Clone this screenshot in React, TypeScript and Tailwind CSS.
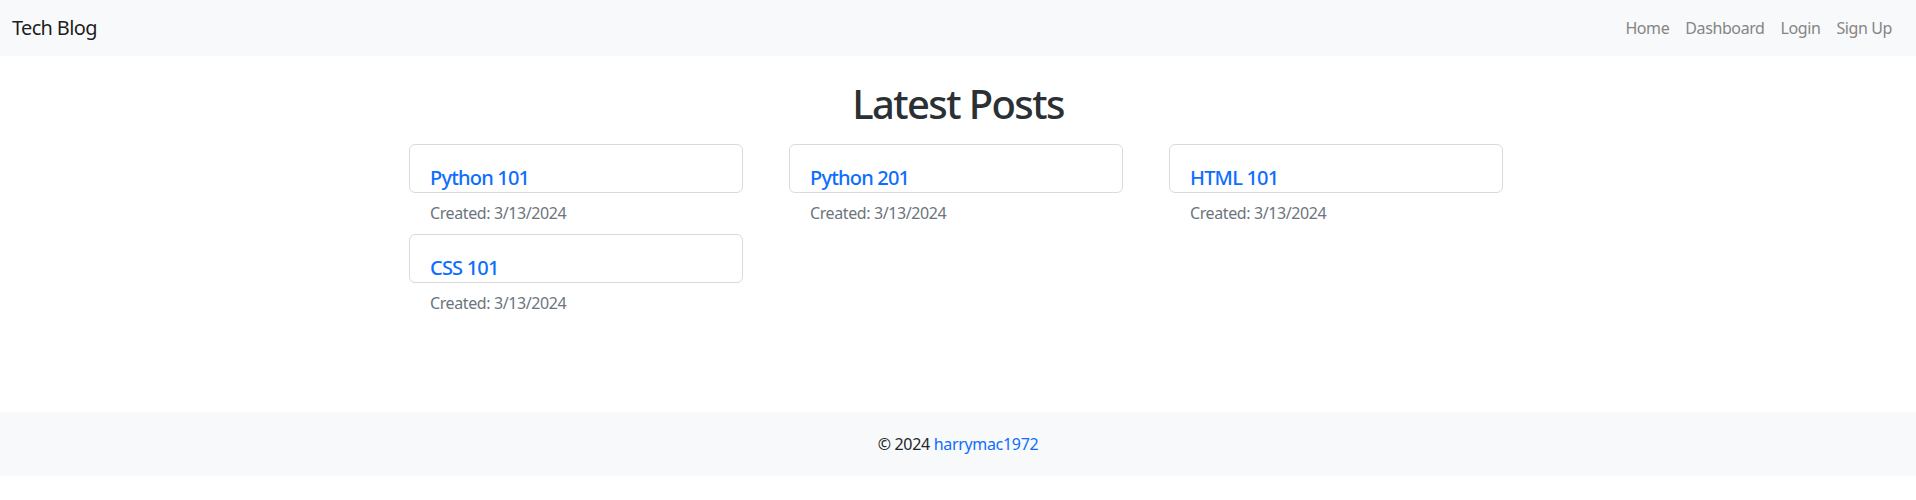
const posts = [
  { id: 1, title: 'Python 101', created: '3/13/2024' },
  { id: 2, title: 'Python 201', created: '3/13/2024' },
  { id: 3, title: 'HTML 101', created: '3/13/2024' },
  { id: 4, title: 'CSS 101', created: '3/13/2024' },
];

const font = { fontFamily: '"Noto Sans", "Open Sans", sans-serif' };

function PostCard({ title, created }: { title: string; created: string }) {
  return (
    <div className="w-[334px]">
      <div className="h-[49px] border border-[#dadada] rounded-md bg-white pl-[20px] pt-[21px]">
        <h5 className="text-[20px] leading-6 font-medium tracking-[-0.04em] text-[#0d6efd]">
          <a href="#">{title}</a>
        </h5>
      </div>
      <p className="mt-2 pl-[21px] text-base leading-6 tracking-[-0.025em] text-[#6c757d]">
        Created: {created}
      </p>
    </div>
  );
}

export default function App() {
  return (
    <div className="min-h-[500px] bg-white text-[#212529]" style={font}>
      <nav className="h-14 bg-[#f8f9fa] flex items-center justify-between pl-3 pr-4">
        <a href="#" className="text-[20px] leading-[30px] tracking-[-0.033em] text-black/90">
          Tech Blog
        </a>
        <ul className="flex items-center tracking-[-0.025em]">
          <li><a href="#" className="px-2 text-base leading-6 text-[#858585]">Home</a></li>
          <li><a href="#" className="px-2 text-base leading-6 text-[#858585]">Dashboard</a></li>
          <li><a href="#" className="px-2 text-base leading-6 text-[#858585]">Login</a></li>
          <li><a href="#" className="px-2 text-base leading-6 text-[#858585]">Sign Up</a></li>
        </ul>
      </nav>

      <main className="h-[356px] pt-6">
        <h1 className="text-center text-[40px] leading-[48px] font-medium tracking-[-0.04em] text-[#2b3035]">
          Latest Posts
        </h1>
        <div className="mx-auto w-[1140px] pl-[21px] mt-4">
          <div className="grid grid-cols-[334px_334px_334px] gap-x-[46px] gap-y-[9px]">
            {posts.map((p) => (
              <PostCard key={p.id} title={p.title} created={p.created} />
            ))}
          </div>
        </div>
      </main>

      <footer className="h-16 bg-[#f8f9fa] flex items-center justify-center text-base tracking-[-0.02em]">
        <span>
          © 2024{' '}
          <a href="#" className="text-[#0d6efd]">
            harrymac1972
          </a>
        </span>
      </footer>
    </div>
  );
}
